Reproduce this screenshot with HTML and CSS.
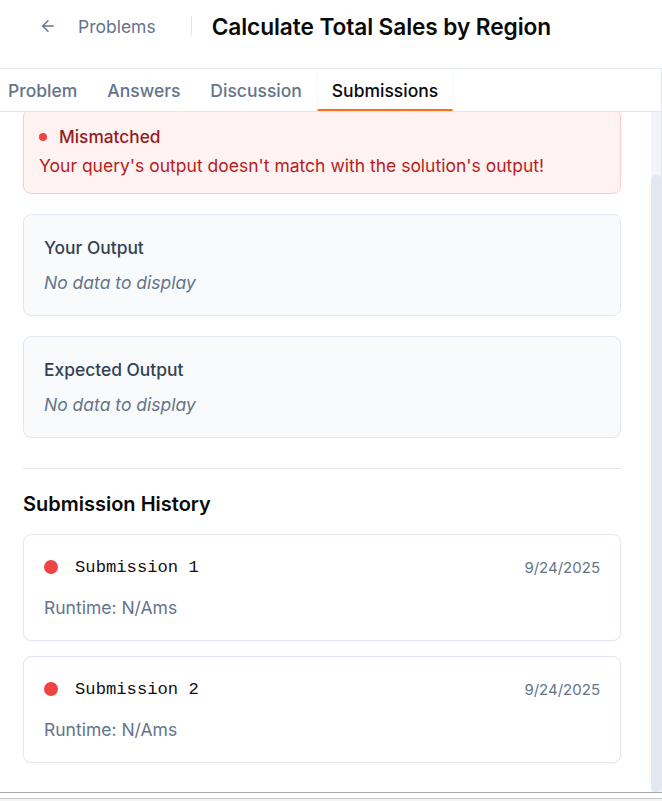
FILE: index.html
```html
<!DOCTYPE html>
<html lang="en">
<head>
<meta charset="utf-8">
<title>Calculate Total Sales by Region</title>
<link rel="stylesheet" href="styles.css">
</head>
<body>
<div class="app">
  <header class="topbar">
    <a class="back" href="#">
      <svg class="back-icon" viewBox="0 0 24 24" width="18" height="18" fill="none" stroke="currentColor" stroke-width="2" stroke-linecap="round" stroke-linejoin="round"><path d="m12 19-7-7 7-7"/><path d="M19 12H5"/></svg>
      <span>Problems</span>
    </a>
    <span class="sep"></span>
    <h1 class="title">Calculate Total Sales by Region</h1>
  </header>

  <section class="panel">
    <nav class="tabs">
      <a class="tab first" href="#">Problem</a>
      <a class="tab" href="#">Answers</a>
      <a class="tab" href="#">Discussion</a>
      <a class="tab active" href="#">Submissions</a>
    </nav>

    <div class="viewport">
      <div class="scroll">
        <div class="content">
          <div class="alert">
            <div class="alert-title"><span class="alert-dot"></span>Mismatched</div>
            <p class="alert-msg">Your query's output doesn't match with the solution's output!</p>
          </div>

          <div class="output-card">
            <div class="output-title">Your Output</div>
            <div class="output-empty">No data to display</div>
          </div>

          <div class="output-card">
            <div class="output-title">Expected Output</div>
            <div class="output-empty">No data to display</div>
          </div>

          <hr class="divider">

          <h2 class="history-heading">Submission History</h2>

          <div class="history">
            <div class="sub-card">
              <div class="sub-row">
                <span class="sub-dot"></span>
                <span class="sub-name">Submission 1</span>
                <span class="sub-date">9/24/2025</span>
              </div>
              <div class="sub-runtime">Runtime: N/Ams</div>
            </div>
            <div class="sub-card">
              <div class="sub-row">
                <span class="sub-dot"></span>
                <span class="sub-name">Submission 2</span>
                <span class="sub-date">9/24/2025</span>
              </div>
              <div class="sub-runtime">Runtime: N/Ams</div>
            </div>
          </div>
        </div>
      </div>
      <div class="scrollbar" aria-hidden="true">
        <div class="scrollbar-thumb"></div>
      </div>
    </div>
  </section>

  <div class="frame-bottom"></div>
</div>
</body>
</html>
```

FILE: styles.css
```css
* { box-sizing: border-box; }

html, body {
  margin: 0;
  padding: 0;
  background: #ffffff;
  height: 100%;
  overflow: hidden;
}

body {
  font-family: Inter, "Noto Sans", "Liberation Sans", sans-serif;
  color: #0f172a;
}

.app {
  display: flex;
  flex-direction: column;
  height: 801px;
}

/* Header */
.topbar {
  display: flex;
  align-items: center;
  height: 52px;
  padding-left: 39px;
  margin-bottom: 16px;
  flex: none;
}

.back {
  display: flex;
  align-items: center;
  gap: 21px;
  color: #64748b;
  text-decoration: none;
  font-size: 17.5px;
  font-weight: 400;
}

.back-icon { display: block; }

.sep {
  width: 1px;
  height: 20px;
  background: #e2e8f0;
  margin: 0 20px 0 35px;
}

.title {
  margin: 0;
  font-size: 22.7px;
  font-weight: 600;
  color: #0a0a0a;
  letter-spacing: -0.1px;
}

/* Panel */
.panel {
  display: flex;
  flex-direction: column;
  border-top: 1px solid #e2e8f0;
  border-right: 1px solid #e2e8f0;
  height: 724px;
  flex: none;
}

.tabs {
  display: flex;
  height: 43px;
  border-bottom: 1px solid #e2e8f0;
  flex: none;
}

.tab {
  display: flex;
  align-items: center;
  padding: 2px 15px 0;
  font-size: 17.5px;
  font-weight: 500;
  color: #64748b;
  text-decoration: none;
  border-bottom: 2px solid transparent;
}

.tab.first { padding-left: 8px; }

.tab.active {
  color: #0a0a0a;
  padding: 2px 14px 0;
  border-bottom-color: #f97316;
  border-left: 1px solid #f8fafc;
  border-right: 1px solid #f8fafc;
}

.viewport {
  flex: 1;
  min-height: 0;
  display: flex;
}

.scroll {
  flex: 1;
  min-width: 0;
  overflow-y: auto;
  scrollbar-width: none;
  display: flex;
  flex-direction: column-reverse;
}

.scroll::-webkit-scrollbar { display: none; }

.scrollbar {
  width: 10px;
  flex: none;
  background: #f1f5f9;
  display: flex;
  flex-direction: column;
  padding-top: 63px;
}

.scrollbar-thumb {
  flex: 1;
  background: #e2e8f0;
  border-radius: 6px;
}

.content {
  padding: 24px 30px 29px 23px;
  display: flex;
  flex-direction: column;
}

/* Alert */
.alert {
  background: #fef2f2;
  border: 1px solid #fecaca;
  border-radius: 8px;
  padding: 15px 15px 15px;
}

.alert-title {
  display: flex;
  align-items: center;
  gap: 12px;
  font-size: 17.3px;
  line-height: 24px;
  font-weight: 500;
  color: #991b1b;
}

.alert-dot {
  width: 8px;
  height: 8px;
  border-radius: 50%;
  background: #ef4444;
}

.alert-msg {
  margin: 5px 0 0;
  font-size: 17.5px;
  line-height: 24px;
  color: #b91c1c;
}

/* Output cards */
.output-card {
  margin-top: 20px;
  background: #f8fafc;
  border: 1px solid #e2e8f0;
  border-radius: 8px;
  padding: 21px 20px 20px;
}

.output-title {
  font-size: 17.4px;
  line-height: 24px;
  font-weight: 500;
  color: #334155;
  margin-bottom: 11px;
}

.output-empty {
  font-size: 17.5px;
  line-height: 24px;
  font-style: italic;
  color: #64748b;
}

.divider {
  border: 0;
  border-top: 1px solid #e2e8f0;
  margin: 30px 0 0;
}

.history-heading {
  margin: 21px 0 16px;
  font-size: 20px;
  line-height: 28px;
  font-weight: 600;
  color: #0a0a0a;
}

.history {
  display: flex;
  flex-direction: column;
  gap: 15px;
}

.sub-card {
  background: #ffffff;
  border: 1px solid #e2e8f0;
  border-radius: 8px;
  padding: 20px 20px 20px;
  box-shadow: 0 1px 2px rgba(15, 23, 42, 0.04);
}

.sub-row {
  display: flex;
  align-items: center;
  height: 24px;
}

.sub-dot {
  width: 14px;
  height: 14px;
  border-radius: 50%;
  background: #ef4444;
  margin-right: 17px;
  flex: none;
}

.sub-name {
  font-family: "Liberation Mono", "DejaVu Sans Mono", monospace;
  font-size: 17.2px;
  color: #111111;
  flex: 1;
}

.sub-date {
  font-size: 15px;
  color: #64748b;
}

.sub-runtime {
  margin-top: 17px;
  font-size: 17.5px;
  line-height: 24px;
  color: #64748b;
}

.frame-bottom {
  flex: none;
  height: 9px;
  border-top: 1px solid #a8a8a8;
  background: linear-gradient(#ffffff 0 5px, #c6cdc6 5px 6px, #f2f3f2 6px);
}
```
